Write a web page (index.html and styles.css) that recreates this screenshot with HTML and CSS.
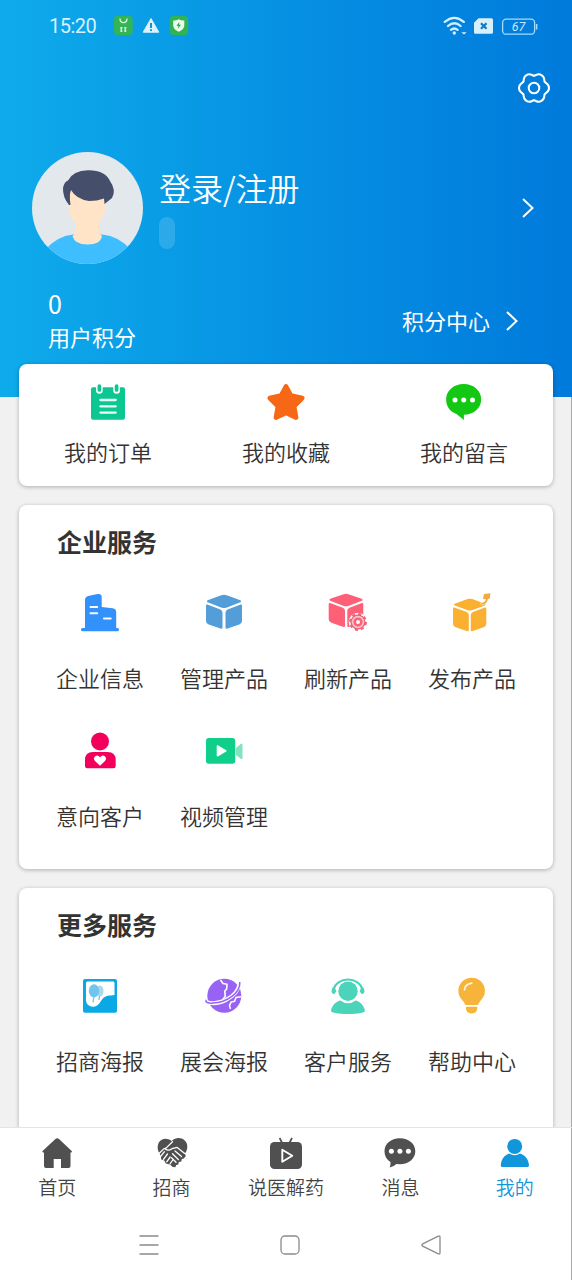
FILE: index.html
```html
<!DOCTYPE html>
<html lang="zh-CN">
<head>
<meta charset="utf-8">
<title>我的</title>
<link rel="stylesheet" href="styles.css">
</head>
<body>
<div class="screen">
  <header class="hero">
    <div class="status">
      <span class="time">15:20</span>
      <svg class="status-apps" width="76" height="20" viewBox="113 16 76 20">
        <rect x="114" y="16" width="18.7" height="19" rx="4" fill="#32b557"/>
        <path d="M120 18.500c0 5.500 7 5.500 7 0M121.300 27v5M125.200 27v5" fill="none" stroke="#d5f5d9" stroke-width="1.300"/>
        <path d="M120.300 27.800h2.300M124.200 27.800h2.300M120.300 31h2.300M124.200 31h2.300" stroke="#d5f5d9" stroke-width="1.200"/>
        <path d="M151 18.500l7.800 13.700h-15.600z" fill="#dcf2fd" stroke="#dcf2fd" stroke-width="1" stroke-linejoin="round"/>
        <path d="M151 23v5M151 29.300v1.800" stroke="#0b8dd2" stroke-width="1.900"/>
        <rect x="169.500" y="16" width="18.700" height="19" rx="4" fill="#2fb354"/>
        <path d="M173.200 20.500q3 .3 5.500-1.200 2.600 1.500 5.600 1.200v4.500c0 3.500-2.500 5.300-5.600 6.700-3-1.400-5.500-3.200-5.500-6.700z" fill="#eafbea"/>
        <path d="M179.400 22l-2.900 3.800h2l-.6 3 3-4.100h-2z" fill="#249c47"/>
      </svg>
      <svg class="status-system" width="96" height="20" viewBox="443 15 96 20">
        <g fill="none" stroke="#d4effd" stroke-width="2.300" stroke-linecap="round">
          <path d="M444.800 20.900q9.500-8 19 0M448 25q6.300-5.500 12.600 0M451 28.800q3.300-2.700 6.600 0"/>
        </g>
        <circle cx="454.300" cy="32" r="1.700" fill="#d4effd"/>
        <path d="M461.300 31.300h5.400l-2.700 2.200z" fill="#d4effd"/>
        <path d="M478.500 17.300h13a1.500 1.500 0 0 1 1.500 1.500v12.400a1.500 1.500 0 0 1-1.500 1.500h-16a1.500 1.500 0 0 1-1.500-1.500v-9.500z" fill="#d8effc"/>
        <path d="M481 22.300l5.500 5.500M486.500 22.300l-5.500 5.500" stroke="#1078c4" stroke-width="2.200"/>
        <rect x="502.600" y="18.200" width="32" height="15" rx="3.500" fill="none" stroke="#a6dbfa" stroke-width="1.300"/>
        <path d="M536.600 23v5.500" stroke="#a6dbfa" stroke-width="1.600"/>
        <text class="battery-text" x="518.500" y="30" text-anchor="middle">67</text>
      </svg>
    </div>
    <div class="toolbar">
      <svg width="34" height="34" viewBox="-17 -17 34 34" fill="none" stroke="#fff" stroke-width="2" stroke-linecap="round">
        <circle r="5.300"/>
        <path id="lobe" d="M10.700-6.200C11.700-4.500 15-4.400 15 0S11.700 4.500 10.700 6.200"/>
        <use href="#lobe" transform="rotate(60)"/><use href="#lobe" transform="rotate(120)"/><use href="#lobe" transform="rotate(180)"/><use href="#lobe" transform="rotate(240)"/><use href="#lobe" transform="rotate(300)"/>
      </svg>
    </div>
    <div class="profile">
      <svg class="avatar" width="111" height="112" viewBox="32 152 111 112">
        <clipPath id="face"><ellipse cx="87.500" cy="208" rx="55.500" ry="56"/></clipPath>
        <g clip-path="url(#face)">
          <path d="M32 152h111v112H32z" fill="#e3e8ec"/>
          <path d="M45 250Q57 236 73 234.500h29Q119 236 131 250v16H45z" fill="#3fbeff"/>
          <path d="M68.500 192v13q0 12 7 17v6q0 6-3 8 2 8.500 15 8.500t14.500-8.500q-3-2-3-8v-6q6-5 6.500-17v-13z" fill="#ffe4c8"/>
          <path d="M69 205Q62.500 197 63 188q1-6 5-7.500Q73 170.500 88 170.200q17-.2 22 10.800 6.500 9 2 17l-7.500 6-.5-5.500q-7 2.500-15 2.500-13-2-18-11-2 5-.5 15z" fill="#454f6c"/>
        </g>
      </svg>
      <div class="identity">
        <div class="login">登录/注册</div>
        <div class="badge"></div>
      </div>
      <svg class="arrow" width="14" height="22" viewBox="0 0 14 22"><path d="M2 2l9.500 9L2 20"/></svg>
    </div>
    <div class="points">
      <div class="points-own"><div class="points-value">0</div><div class="points-label">用户积分</div></div>
      <div class="points-center"><span>积分中心</span><svg class="arrow" width="14" height="22" viewBox="0 0 14 22"><path d="M2 2l9.500 9L2 20"/></svg></div>
    </div>
  </header>

  <main class="content">
    <section class="card shortcuts">
      <div class="item">
        <svg width="44" height="44" viewBox="86 380 44 44">
          <rect x="91" y="387.300" width="34" height="32.500" rx="2" fill="#0dc792"/>
          <path d="M99.400 384v6.500M116.600 384v6.500" stroke="#fff" stroke-width="6.600" stroke-linecap="round"/>
          <path d="M99.400 386v4M116.600 386v4" stroke="#0dc792" stroke-width="3.700" stroke-linecap="round"/>
          <path d="M100.400 400h15.300M100.400 406.300h15.300M100.400 412.600h15.300" stroke="#e9fff8" stroke-width="2.300" stroke-linecap="round"/>
        </svg><span>我的订单</span>
      </div>
      <div class="item">
        <svg width="44" height="44" viewBox="264 380 44 44"><path d="M286 386.300l5 9.200 11.300 2.600-8.200 8.300 2 11.200-10.100-4.600-10.100 4.600 2-11.200-8.200-8.300 11.300-2.600z" fill="#f76816" stroke="#f76816" stroke-width="4.600" stroke-linejoin="round"/></svg><span>我的收藏</span>
      </div>
      <div class="item">
        <svg width="44" height="44" viewBox="442 380 44 44"><path d="M463.700 384c10 0 17.500 6.800 17.500 15.400s-7.500 15.200-17.300 15.300v5.200l-7.400-6c-6-2-10.400-7.500-10.400-14.500 0-8.600 7.600-15.400 17.600-15.400z" fill="#13c813"/><g fill="#fff"><circle cx="455" cy="400" r="2.500"/><circle cx="463.700" cy="400" r="2.500"/><circle cx="472.500" cy="400" r="2.500"/></g></svg><span>我的留言</span>
      </div>
    </section>

    <section class="card services">
      <h2>企业服务</h2>
      <div class="grid">
        <div class="item">
          <svg width="44" height="44" viewBox="78 591 44 44"><path d="M85 628v-28q0-3 3-4l9.500-2q4.200-.6 4.200 3v10l11 1.200q3.500.6 3.500 4V628h1.300q1.500 0 1.500 1.700t-1.500 1.600h-35q-1.500 0-1.500-1.600t1.500-1.700z" fill="#3291fa"/><path d="M90.500 607h6.700M90.500 613.300h6.700M104 618.600h6.700" stroke="#fff" stroke-width="2" stroke-linecap="round"/></svg><span>企业信息</span>
        </div>
        <div class="item">
          <svg width="44" height="44" viewBox="202 591 44 44"><g fill="#539ed8" stroke="#539ed8" stroke-width="2" stroke-linejoin="round"><path d="M208 601.300l13.500-5q2.500-1 5 0l13.500 5-13.500 5.200q-2.500.9-5 0z"/><path d="M207 605.500l13 5q1.500.6 1.500 2v15.300l-12.500-4.300q-2-.7-2-2.500zM241 605.500l-13 5q-1.500.6-1.500 2v15.300l12.500-4.300q2-.7 2-2.500z"/></g></svg><span>管理产品</span>
        </div>
        <div class="item">
          <svg width="44" height="44" viewBox="326 591 44 44"><g fill="#fd6077" stroke="#fd6077" stroke-width="2" stroke-linejoin="round"><path d="M330.500 599.800l13.500-4.700q2-.7 4 0l13.500 4.700-13 4.900q-2.500.9-5 0z"/><path d="M329.700 604l12.800 4.700q1.500.6 1.500 2V626l-12.300-4.300q-2-.7-2-2.500zM362.300 604l-12.500 4.700q-1.500.6-1.500 2V626h14z"/></g><circle cx="358" cy="622" r="9.300" fill="#fff"/><circle cx="358" cy="622" r="8" fill="none" stroke="#ee6076" stroke-width="1.900" stroke-dasharray="3.140 3.140"/><circle cx="358" cy="622" r="6.900" fill="#fbc4cc" stroke="#ee6076" stroke-width="1.300"/><circle cx="358" cy="622" r="3.300" fill="#fff" stroke="#fd6077" stroke-width="2.600"/></svg><span>刷新产品</span>
        </div>
        <div class="item">
          <svg width="44" height="44" viewBox="450 591 44 44"><g fill="#fab030" stroke="#fab030" stroke-width="2" stroke-linejoin="round"><path d="M455 604.600l13-4.600q2-.7 4 0l12.500 4.600-12.200 4.500q-2.300.9-4.600 0z"/><path d="M454 608.500l12.300 4.500q1.500.6 1.500 2v15.300l-11.800-4q-2-.7-2-2.500zM485.300 608.500l-12 4.500q-1.500.6-1.500 2v15.300l11.500-4q2-.7 2-2.500z"/></g><path d="M480.500 603.300q5-1 5.500-4l-3-.3 1-5 6.500-.8-1 6-1.500-.4q-1 5.500-5.500 6z" fill="#efab3c" stroke="#fff" stroke-width="1" paint-order="stroke"/></svg><span>发布产品</span>
        </div>
        <div class="item">
          <svg width="44" height="44" viewBox="78 729 44 44"><circle cx="100" cy="741.400" r="9" fill="#f3005d"/><path d="M93 752h14.500q8.200 0 8.200 8v6q0 2.200-2.200 2.200h-26.300Q85 768.200 85 766v-6q0-8 8-8z" fill="#f3005d"/><path d="M100 765.800l-5-4.700q-2.200-2.600 0-4.700 2.600-2 5 .8 2.400-2.800 5-.8 2.200 2.100 0 4.700z" fill="#fff"/></svg><span>意向客户</span>
        </div>
        <div class="item">
          <svg width="44" height="44" viewBox="202 729 44 44"><rect x="206" y="738" width="29.200" height="25.800" rx="2.800" fill="#0fcf8b"/><path d="M217.500 746l8.300 4.900-8.300 4.800z" fill="#fff" stroke="#fff" stroke-width="1.600" stroke-linejoin="round"/><path d="M235.700 748.200l5-4.300q1.800-1 1.800.8v13.200q0 1.800-1.800.8l-5-4z" fill="#82e3bf"/></svg><span>视频管理</span>
        </div>
      </div>
    </section>

    <section class="card services">
      <h2>更多服务</h2>
      <div class="grid">
        <div class="item">
          <svg width="44" height="44" viewBox="78 974 44 44"><rect x="83" y="979" width="34" height="33.800" rx="2" fill="#0ba8e6"/><path d="M87.500 981.500h25.500q1.500 0 1.500 1.500V995c-5 .8-9 0-12.500 4.500-3 4.500-5 7.500-9 7.200-5-.5-7-3-7-7.200v-16.500q0-1.500 1.500-1.500z" fill="#fff"/><ellipse cx="100" cy="991" rx="3.500" ry="5.500" fill="#a8d9f1"/><ellipse cx="94" cy="990.800" rx="5.200" ry="6.500" fill="#72c4ea"/><path d="M94 996l-1 6.500M99.500 996l-.6 4" stroke="#72c4ea" stroke-width="1.300"/></svg><span>招商海报</span>
        </div>
        <div class="item">
          <svg width="44" height="44" viewBox="202 974 44 44"><circle cx="224.300" cy="995.700" r="17" fill="#9863f4"/><path d="M220.500 980l2.500 3.500 4 .7-.3 4.500-2 2.500.6 5-2.300 3" fill="none" stroke="#fff" stroke-width="1.600" stroke-linejoin="round"/><path d="M205.800 1001.500C216 1006.500 237 999 239.800 983" fill="none" stroke="#fff" stroke-width="4"/><path d="M206 999.800q-1 3.700 7 3.300C227 1002.500 240.500 993 239.800 982" fill="none" stroke="#9863f4" stroke-width="1.500"/><path d="M241 996.800l-5 .7-1.500 3.800-3.500.8-1.500 3.500 1 3.400" fill="none" stroke="#fff" stroke-width="1.500"/></svg><span>展会海报</span>
        </div>
        <div class="item">
          <svg width="44" height="44" viewBox="326 974 44 44"><g fill="#4cd4bb"><circle cx="348" cy="991.200" r="9.700"/><path d="M340.300 1000.500q7.700 5.500 15.400 0c5 1.300 8 5 9.200 9.700.5 2.600-5.900 3.700-16.900 3.700s-17.400-1.100-17-3.700c1.300-4.700 4.300-8.400 9.300-9.700z"/><path d="M332.500 987.500q3.200.5 4 3.500l-2 3q-2.800.3-3-3zM363.500 987.500q-3.200.5-4 3.500l2 3q2.800.3 3-3z"/></g><path d="M333.600 989.500a14.600 12 0 0 1 28.800 0" fill="none" stroke="#4cd4bb" stroke-width="2.200"/></svg><span>客户服务</span>
        </div>
        <div class="item">
          <svg width="44" height="44" viewBox="450 974 44 44"><path d="M471.700 977.700c7.600 0 13.200 5.700 13.200 12.900 0 5.500-2.600 8.200-5 10.900-1.600 1.900-1 3.500-3 3.500h-10.500c-2 0-1.400-1.600-3-3.500-2.400-2.700-5-5.400-5-10.900 0-7.200 5.700-12.900 13.300-12.900zM465.800 1006.800h11.600q0 6.700-5.800 6.700t-5.800-6.700z" fill="#f6b43a"/><path d="M464.500 990q.3-5.500 7.300-6.800" fill="none" stroke="#fff5dc" stroke-width="1.700" stroke-linecap="round"/></svg><span>帮助中心</span>
        </div>
      </div>
    </section>
  </main>

  <nav class="tabs">
    <div class="tab"><svg width="34" height="34" viewBox="40 1136 34 34"><path d="M57.200 1138.300q1 0 1.800.8l12.700 12q.8 1.200-.5 1.400h-.7v13.500q0 2-2 2H61v-9h-7.300v9h-7.700q-2 0-2-2v-13.500h-.8q-1.400-.2-.6-1.400l12.800-12q.8-.8 1.800-.8z" fill="#505050"/></svg><span>首页</span></div>
    <div class="tab"><svg width="34" height="34" viewBox="154.500 1136 34 34"><path d="M171.500 1140.700c5-5 15.300-2.700 15.300 6 0 3-1 5-2.500 6.800l1 2.500-2 2.500-2 .5-.5 2.500-2.500.5-.5 2.500-2 .5-1 2.300-2.500-.3-3-2.500-4-1-1.500-3-3-1-.5-3-1.500-3.500c-5-8 2.200-19 12.700-11.800z" fill="#505050"/><g fill="none" stroke="#fff" stroke-linecap="round" stroke-linejoin="round" stroke-width="1.300"><path d="M158.500 1153.500l4.800-4.600 2.200-.8 6.500-6.400M165 1149q2.500 2.500 6.500-.3l5.200-1.300 7.500 6M174.500 1151l6.500 5.500M172 1153.700l5.800 5.800M171 1157.800l4.500 4.500"/><path d="M164 1151.700l-4 4.800M167 1154l-4 5.300M169.700 1157l-3.500 4.800M172.200 1160l-2.700 4"/></g></svg><span>招商</span></div>
    <div class="tab"><svg width="34" height="34" viewBox="269 1136 34 34"><path d="M279.600 1138l2.600 5M292 1138l-2.600 5" stroke="#505050" stroke-width="1.700"/><rect x="270" y="1142" width="32" height="27" rx="4.500" fill="#505050"/><path d="M282.300 1149.700l10 6-10 6z" fill="none" stroke="#fff" stroke-width="1.900" stroke-linejoin="round"/></svg><span>说医解药</span></div>
    <div class="tab"><svg width="34" height="34" viewBox="383.500 1136 34 34"><path d="M400.400 1138.300c9 0 15.400 5.600 15.400 12.900s-6.400 13-15.400 13l-3.500-.3q-2.500 2.500-6.700 3.500 1-2.500.8-5.500c-4-2.500-6-6-6-10.700 0-7.300 6.400-12.900 15.400-12.900z" fill="#505050"/><g fill="#fff"><circle cx="391.900" cy="1151.300" r="2.500"/><circle cx="400.400" cy="1151.300" r="2.500"/><circle cx="408.900" cy="1151.300" r="2.500"/></g></svg><span>消息</span></div>
    <div class="tab active"><svg width="34" height="34" viewBox="497.700 1136 34 34"><circle cx="514.400" cy="1146.400" r="7.500" fill="#1296db"/><path d="M509 1153.600q5.300 3.200 10.700 0c5.200 1.500 8.500 6 9 11.500q.1 1.800-1.200 1.800h-26q-1.200 0-1-1.800c.5-5.500 3.500-10 8.500-11.500z" fill="#1296db"/></svg><span>我的</span></div>
  </nav>
  <div class="system-nav">
    <svg width="22" height="22" viewBox="0 0 22 22"><path d="M1.500 2h19M1.500 11h19M1.500 20h19"/></svg>
    <svg width="22" height="22" viewBox="0 0 22 22"><rect x="2" y="2" width="18" height="18" rx="4"/></svg>
    <svg width="22" height="22" viewBox="0 0 22 22"><path d="M2.700 9.800L18.300 2.200q1.700-.6 1.700 1v15.600q0 1.600-1.700 1L2.700 12.200q-1.500-1.200 0-2.400z"/></svg>
  </div>
</div>
</body>
</html>
```
FILE: styles.css
```css
* { box-sizing: border-box; }
body {
  margin: 0;
  font-family: "Noto Sans CJK SC", sans-serif;
  color: #333;
}
svg { display: block; flex: none; }
.screen {
  width: 572px;
  height: 1280px;
  display: flex;
  flex-direction: column;
  overflow: hidden;
  background: #f1f1f1;
  box-shadow: inset -1px 0 #a9a9ab;
}
.hero {
  flex: none;
  height: 397px;
  color: #fff;
  background: linear-gradient(90deg, #0eabeb, #0691e3 50%, #007adb);
}
.status {
  height: 52px;
  padding: 0 33px 0 49px;
  display: flex;
  align-items: center;
}
.time {
  width: 64px;
  font: 20px/52px Roboto, sans-serif;
  letter-spacing: -0.5px;
  color: #d8f1fd;
}
.status-system { margin-left: auto; }
.battery-text {
  font: italic 400 12.5px Roboto, sans-serif;
  fill: #c5e8fc;
}
.toolbar {
  height: 73px;
  padding: 19px 21px 0 0;
  display: flex;
  justify-content: flex-end;
}
.profile {
  height: 166px;
  padding: 27px 37px 0 32px;
  display: flex;
  align-items: flex-start;
}
.identity { margin-left: 16px; }
.login {
  height: 65px;
  font-size: 32px;
  line-height: 71px;
  font-weight: 350;
}
.badge {
  width: 16px;
  height: 32px;
  border-radius: 8px;
  background: rgba(255, 255, 255, .14);
}
.arrow {
  fill: none;
  stroke: #fff;
  stroke-width: 2;
}
.profile .arrow { margin: 45px 0 0 auto; }
.points {
  display: flex;
  justify-content: space-between;
  padding: 0 53px 0 48px;
  font-size: 22px;
}
.points-value {
  font-size: 25px;
  line-height: 24px;
}
.points-label { line-height: 42px; }
.points-center {
  height: 58px;
  margin-top: 1px;
  display: flex;
  align-items: center;
  gap: 15px;
}
.points-center span { padding-bottom: 3px; }
.content {
  flex: 1;
  min-height: 0;
  margin-top: -33px;
  padding: 0 19px;
  display: flex;
  flex-direction: column;
  gap: 19px;
}
.card {
  flex: none;
  background: #fff;
  border-radius: 8px;
  box-shadow: 0 1px 4px rgba(0, 0, 0, .28);
}
.item {
  display: flex;
  flex-direction: column;
  align-items: center;
  font-size: 22px;
  line-height: 32px;
  font-weight: 350;
}
.shortcuts {
  height: 122px;
  padding-top: 16px;
  display: grid;
  grid-template-columns: repeat(3, 1fr);
}
.shortcuts .item { gap: 11px; }
.services {
  height: 364px;
  padding: 18px 19px 0;
}
.services h2 {
  margin: 0 0 32px 19px;
  font-size: 25px;
  line-height: 36px;
  font-weight: 700;
}
.grid {
  display: grid;
  grid-template-columns: repeat(4, 124px);
  grid-auto-rows: 138px;
}
.services .item { gap: 26px; }
.tabs {
  flex: none;
  position: relative;
  height: 84px;
  display: grid;
  grid-template-columns: repeat(5, 1fr);
  background: #fff;
  border-top: 1px solid #e4e4e4;
  box-shadow: inset -1px 0 #a9a9ab;
}
.tab {
  padding-top: 8px;
  display: flex;
  flex-direction: column;
  align-items: center;
  font-size: 19px;
  line-height: 34px;
  font-weight: 350;
  color: #444;
}
.active { color: #1296db; }
.system-nav {
  flex: none;
  height: 69px;
  display: flex;
  justify-content: center;
  gap: 119px;
  padding: 23px 0 0 8px;
  background: #fff;
  box-shadow: inset -1px 0 #a9a9ab;
}
.system-nav svg {
  fill: none;
  stroke: #8b8b8b;
  stroke-width: 1.300;
}
```
